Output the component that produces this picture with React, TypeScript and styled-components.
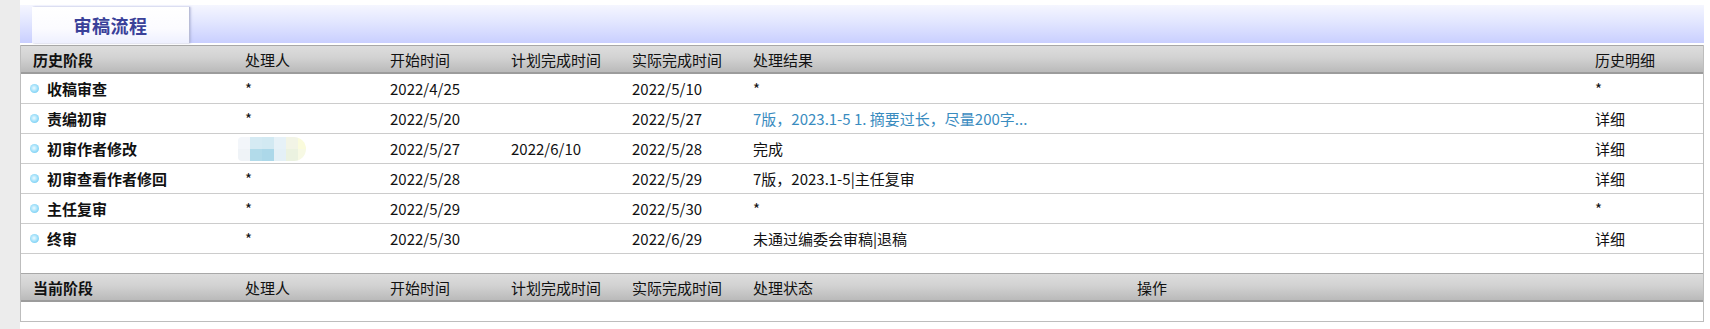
import React from "react";
import styled, { createGlobalStyle } from "styled-components";

const GlobalStyle = createGlobalStyle`
  html, body { margin: 0; padding: 0; background: #ffffff; }
  body {
    font-family: "Noto Sans CJK SC", "Noto Sans", sans-serif;
    font-size: 15px;
    color: #111;
  }
`;

const Page = styled.div`
  display: flex;
  width: 1710px;
  height: 329px;
`;

const Sidebar = styled.div`
  width: 20px;
  flex: none;
  background: #ececec;
`;

const Main = styled.div`
  flex: 1;
  padding: 5px 6px 0 0;
  display: flex;
  flex-direction: column;
`;

const TabBar = styled.div`
  height: 38px;
  display: flex;
  align-items: flex-end;
  padding-left: 12px;
  background: linear-gradient(to bottom, #f5f6ff 0%, #e2e6ff 45%, #c9cfff 100%);
`;

const Tab = styled.div`
  width: 157px;
  height: 36px;
  display: flex;
  align-items: center;
  justify-content: center;
  background: linear-gradient(to bottom, #ffffff 0%, #fbfbff 60%, #eef0ff 100%);
  box-shadow: 1px 0 1px #b9bdd8, 2px 0 2px rgba(150, 155, 200, 0.5);
  font-size: 18px;
  font-weight: 700;
  color: #3a4199;
  letter-spacing: 0.5px;
`;

const Table = styled.div`
  margin-top: 2px;
  border: 1px solid #bdbdbd;
  border-top: none;
`;

const Grid = styled.div<{ $cols: string }>`
  display: grid;
  grid-template-columns: ${(p) => p.$cols};
`;

const HeaderRow = styled(Grid)`
  height: 26px;
  align-items: center;
  background: linear-gradient(to bottom, #dddddd 0%, #d2d2d2 45%, #bababa 100%);
  border-top: 1px solid #a8a8a8;
  border-bottom: 2px solid #9c9c9c;
`;

const HeadCell = styled.div<{ $bold?: boolean }>`
  padding-left: 12px;
  font-weight: ${(p) => (p.$bold ? 700 : 400)};
  color: #111;
  white-space: nowrap;
`;

const Row = styled(Grid)`
  height: 29px;
  align-items: center;
  border-bottom: 1px solid #cccccc;
`;

const EmptyRow = styled.div<{ $h: number }>`
  height: ${(p) => p.$h}px;
`;

const Cell = styled.div<{ $link?: boolean }>`
  padding-left: 12px;
  white-space: nowrap;
  color: ${(p) => (p.$link ? "#3a8cbf" : "#111")};
`;

const StageCell = styled.div`
  display: flex;
  align-items: center;
  gap: 8px;
  padding-left: 9px;
  font-weight: 700;
  color: #111;
`;

const Dot = styled.span`
  width: 9px;
  height: 9px;
  border-radius: 50%;
  background: radial-gradient(circle at 45% 45%, #eefaff 0%, #a6e2fa 45%, #55bfee 100%);
  flex: none;
`;

const Mosaic = styled.span`
  display: inline-grid;
  vertical-align: middle;
  grid-template-columns: repeat(5, 12px) 8px;
  grid-template-rows: 12px 12px;
  margin-left: -7px;
  border-radius: 4px 12px 12px 4px;
  overflow: hidden;
  filter: blur(0.5px);
`;

const Tile = styled.span<{ $c: string }>`
  background: ${(p) => p.$c};
`;

const COLS1 = "212px 145px 121px 121px 121px 1fr 120px";
const COLS2 = "212px 145px 121px 121px 121px 384px 1fr";

const mosaicColors = [
  "#f3f6fa", "#d5eaf3", "#d2e9f2", "#e6f1f7", "#f2f4e6", "#fafbdc",
  "#eff3f7", "#b2dbea", "#acd8e9", "#e4f0f6", "#ebf2e0", "#f7f9e4",
];

type R = {
  stage: string;
  person: string | null;
  start: string;
  plan: string;
  actual: string;
  result: string;
  link?: boolean;
  detail: string;
};

const rows: R[] = [
  { stage: "收稿审查", person: "*", start: "2022/4/25", plan: "", actual: "2022/5/10", result: "*", detail: "*" },
  { stage: "责编初审", person: "*", start: "2022/5/20", plan: "", actual: "2022/5/27", result: "7版，2023.1-5 1. 摘要过长，尽量200字...", link: true, detail: "详细" },
  { stage: "初审作者修改", person: null, start: "2022/5/27", plan: "2022/6/10", actual: "2022/5/28", result: "完成", detail: "详细" },
  { stage: "初审查看作者修回", person: "*", start: "2022/5/28", plan: "", actual: "2022/5/29", result: "7版，2023.1-5|主任复审", detail: "详细" },
  { stage: "主任复审", person: "*", start: "2022/5/29", plan: "", actual: "2022/5/30", result: "*", detail: "*" },
  { stage: "终审", person: "*", start: "2022/5/30", plan: "", actual: "2022/6/29", result: "未通过编委会审稿|退稿", detail: "详细" },
];

export default function App() {
  return (
    <>
      <GlobalStyle />
      <Page>
        <Sidebar />
        <Main>
          <TabBar>
            <Tab>审稿流程</Tab>
          </TabBar>
          <Table>
            <HeaderRow $cols={COLS1}>
              <HeadCell $bold>历史阶段</HeadCell>
              <HeadCell>处理人</HeadCell>
              <HeadCell>开始时间</HeadCell>
              <HeadCell>计划完成时间</HeadCell>
              <HeadCell>实际完成时间</HeadCell>
              <HeadCell>处理结果</HeadCell>
              <HeadCell>历史明细</HeadCell>
            </HeaderRow>
            {rows.map((r) => (
              <Row key={r.stage} $cols={COLS1}>
                <StageCell>
                  <Dot />
                  {r.stage}
                </StageCell>
                <Cell>
                  {r.person ?? (
                    <Mosaic>
                      {mosaicColors.map((c, i) => (
                        <Tile key={i} $c={c} />
                      ))}
                    </Mosaic>
                  )}
                </Cell>
                <Cell>{r.start}</Cell>
                <Cell>{r.plan}</Cell>
                <Cell>{r.actual}</Cell>
                <Cell $link={r.link}>{r.result}</Cell>
                <Cell>{r.detail}</Cell>
              </Row>
            ))}
            <EmptyRow $h={19} />
            <HeaderRow $cols={COLS2}>
              <HeadCell $bold>当前阶段</HeadCell>
              <HeadCell>处理人</HeadCell>
              <HeadCell>开始时间</HeadCell>
              <HeadCell>计划完成时间</HeadCell>
              <HeadCell>实际完成时间</HeadCell>
              <HeadCell>处理状态</HeadCell>
              <HeadCell>操作</HeadCell>
            </HeaderRow>
            <EmptyRow $h={19} />
          </Table>
        </Main>
      </Page>
    </>
  );
}
